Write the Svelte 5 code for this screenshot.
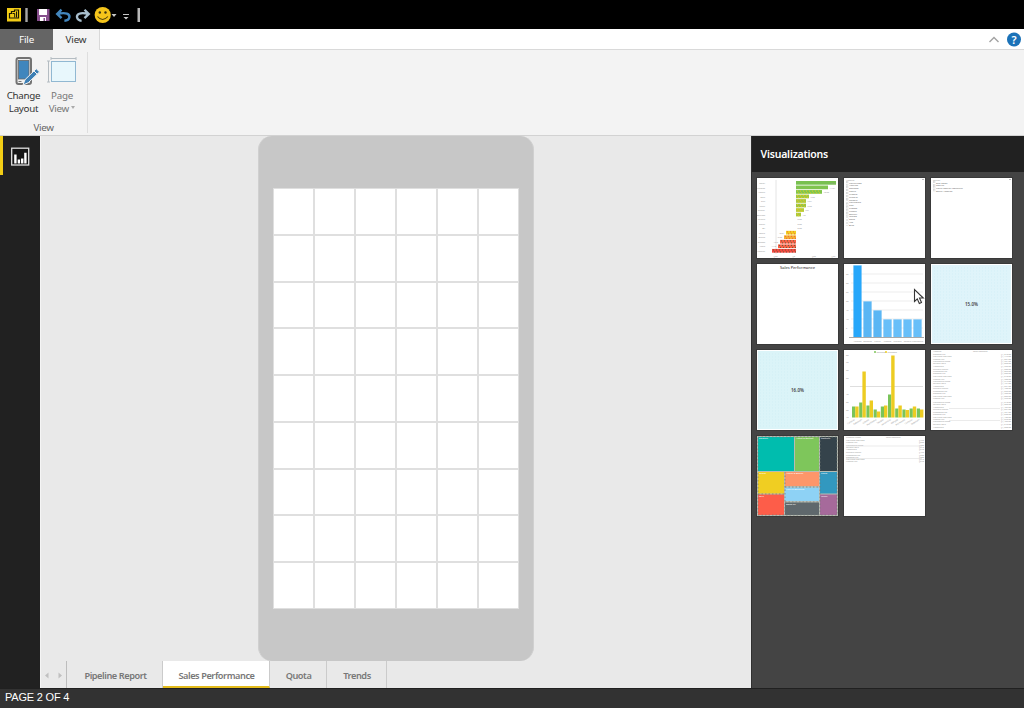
<script>
  const cells = Array.from({ length: 54 });
  const pages = [
    { name: 'Pipeline Report', w: 95 },
    { name: 'Sales Performance', w: 107, active: true },
    { name: 'Quota', w: 57 },
    { name: 'Trends', w: 60 }
  ];
  const bars = [
    ['Retail', 39, 40, '#78c050', '100%'], ['Finance', 39, 32, '#80c450', '11.04'], ['Health', 39, 26, '#80c64a', '10.50'],
    ['Tech', 39, 13, '#a0c840', '7.50'], ['Edu', 39, 10, '#a8c63e', '7.04'], ['Legal', 39, 10, '#9cc540', '6.50'],
    ['Energy', 39, 8, '#b8cb38', '5.0'], ['Services', 39, 5, '#aac83c', '4.0'], ['Mining', 39, 0, '#fff', '0.00'],
    ['Travel', 39, 0, '#fff', '0.00'], ['Oil', 39, 0, '#fff', '0.00'], ['Media', 29, 10, '#f0ce20', '-8.04'],
    ['Sports', 27, 12, '#f3b030', '-9.50'], ['Games', 23, 16, '#fb6046', '-12.0'], ['Food', 21, 18, '#f96045', '-14.0'], ['Apparel', 15, 24, '#f4483f', '']
  ];
  const names = ['Northridge', 'Adatum', 'Contoso', 'Fabrik', 'Litware', 'Wingtip', 'Tailspin', 'Northwind', 'Trey', 'Prosew', 'Lucern', 'Southri', 'Margie', 'Coho', 'Ace', 'Blue'];
  const nameY = [5, 7.8, 10.1, 13, 16, 19.1, 22, 24.5, 27.4, 30.3, 33.2, 36.1, 38.7, 41.5, 44.5, 47.5];
  const cols = [[9.5, 72, '#27a7fa'], [19.5, 36, '#5ab6f4'], [29.5, 27, '#5ab6f4'], [39.5, 18, '#68bff9'], [49.5, 18, '#68bff9'], [59.5, 18, '#68bff9'], [69.5, 18, '#68bff9']];
  const pairs = [[11, 11], [15, 46], [12, 17], [8, 6], [11, 12], [23, 62], [9, 12], [8, 7.5], [9, 11], [9, 8]];
  const rowsY = [5, 7.4, 9.8, 12, 14.2, 17.4, 19.7, 22, 24.2, 26.6, 29.5, 31.9, 34.2, 36.6, 39, 41.8, 44.2, 46.5, 48.8, 53.2, 55.4, 57.8, 60.2, 62.5, 65.4, 67.8, 70.1, 72.4, 74.8, 78.3];
  const company = ['Contoso Ltd', 'Fabrikam Services', 'Litware Inc', 'Northwind Trade', 'Tailspin Toys', 'Adventure', 'Wingtip Works', 'Proseware Co'];
  const table = [4.8, 7.2, 9.5, 12, 14, 17, 20, 22, 24.2, 26];
  const tree = [
    [1, 1, 36, 34, '#00bdae', 'Electron'], [38, 1, 24, 34, '#7ec65b', 'Home & Garden'], [63, 1, 17, 34, '#35434b', 'Clothing'],
    [1, 36, 26, 21.5, '#f0ce22', 'Sports'], [28, 36, 34, 14, '#fd966a', 'Health & Beauty'], [63, 36, 17, 21.5, '#3298bf', 'Travel'],
    [28, 51.5, 34, 13.5, '#8ed2f5', 'Food & Beverage'], [1, 58.5, 26, 20.5, '#fd5d49', 'Toys'],
    [28, 66.5, 34, 12.5, '#5f686c', 'Office Su'], [63, 58.5, 17, 20.5, '#a66a9b', 'Music']
  ];
</script>

<div class="window">
  <header class="titlebar">
    <svg width="150" height="28" viewBox="0 0 150 28">
      <rect x="7" y="8" width="14" height="13.5" fill="#f2cc16" />
      <path d="M9.5 18v-4.5h2v-2h3v-1.5h4v8z" fill="none" stroke="#1b1804" stroke-width="1.2" />
      <path d="M12.5 13.5h2.2v4M16.5 11.5v6" stroke="#1b1804" fill="none" />
      <rect x="25.3" y="8" width="2.4" height="14" fill="#a5a5a5" />
      <path d="M37 9h12.5v12H37z" fill="#864e8c" />
      <path d="M39 9h8v6h-8zM40 17h6v4h-6z" fill="#fff" /><path d="M43.5 18h1.5v3h-1.5z" fill="#864e8c" />
      <path d="M61.5 9.7l-4.3 4.2 4.3 4.2M58 13.9c8-2 12 .4 11.4 3.4-.4 2.2-2.4 3.3-5 3.5" fill="none" stroke="#4386bd" stroke-width="2.4" />
      <path d="M84.5 9.7l4.3 4.2-4.3 4.2M88 13.9c-8-2-11.6.4-11 3.4.4 2.2 2.2 3.3 4.6 3.5" fill="none" stroke="#a9bfce" stroke-width="2.3" />
      <circle cx="102.7" cy="15" r="8.1" fill="#f5c51b" />
      <circle cx="99.8" cy="12.5" r="1.2" fill="#3d3510" /><circle cx="105.5" cy="12.5" r="1.2" fill="#3d3510" />
      <path d="M97.5 16.5q5 6 10.4 0" fill="none" stroke="#51430b" stroke-width="1.1" />
      <path d="M111.5 14h5l-2.5 3zM123.5 17h5l-2.5 2.5z" fill="#c6c6c6" /><path d="M123 14.5h6" stroke="#c6c6c6" />
      <rect x="137.5" y="8" width="2.5" height="14" fill="#b8b8b8" />
    </svg>
  </header>
  <nav class="ribbon-tabs">
    <span class="file">File</span><span class="view">View</span>
    <svg class="help" width="40" height="21" viewBox="0 0 40 21">
      <path d="M5.5 13L10 8.5l4.5 4.5" fill="none" stroke="#a2a2a2" stroke-width="1.4" />
      <circle cx="30" cy="10.5" r="7" fill="#1b72b8" />
      <text x="30" y="14.6" text-anchor="middle" font-size="11" font-weight="600" fill="#fff">?</text>
    </svg>
  </nav>
  <section class="ribbon">
    <div class="group">
      <div class="tools">
        <div class="tool change">
          <svg width="32" height="34" viewBox="0 0 32 34">
            <rect x="8.5" y="4" width="14.5" height="26" rx="2" fill="#f0f0f0" stroke="#737373" stroke-width="2" />
            <rect x="10.5" y="6.5" width="10.5" height="18.5" fill="#4086bd" stroke="#666" stroke-width=".8" />
            <path d="M10.5 27.5h3M16 27.5h3" stroke="#777" />
            <path d="M15 31l2-5.3L28.3 14.7l3.2 3.2-11.2 10.8z" fill="#3c7fb5" stroke="#f3f3f3" stroke-width="1" />
            <path d="M25.7 16.7l3.3 3.3" stroke="#f3f3f3" />
          </svg>
          <span>Change<br />Layout</span>
        </div>
        <div class="tool page">
          <svg width="32" height="34" viewBox="0 0 32 34">
            <rect x="4.5" y="7.5" width="24" height="20" fill="#e8f7fc" stroke="#91b8d2" />
            <path d="M4 4.5h25M1.5 7v21M4 3v3M29 3v3M0 7h3M0 28h3" stroke="#b4bcc2" fill="none" />
          </svg>
          <span>Page<br />View <i></i></span>
        </div>
      </div>
      <span class="group-name">View</span>
    </div>
  </section>
  <main>
    <aside class="rail">
      <div class="report">
        <svg width="20" height="20" viewBox="0 0 20 20"><rect x="1.7" y="1.2" width="17" height="16.8" fill="#151515" stroke="#e0e0e0" stroke-width="1.3" /><path d="M5.4 16.5v-9M8.9 16.5v-4M12.2 16.5v-5M15.4 16.5V5.8" stroke="#fff" stroke-width="2.4" /></svg>
      </div>
    </aside>
    <section class="canvas">
      <div class="phone"><div class="grid">{#each cells as _}<span></span>{/each}</div></div>
      <footer class="pages">
        <div class="arrows"><svg width="26" height="27" viewBox="0 0 26 27"><path d="M7.5 11.5v6L4 14.5zM17.5 11.5v6l3.5-3z" fill="#c0c0c0" /></svg></div>
        {#each pages as p}<div class="tab" class:active={p.active} style:width="{p.w}px">{p.name}</div>{/each}
      </footer>
    </section>
    <aside class="panel">
      <h2>Visualizations</h2>
      <div class="tiles">
        <svg viewBox="0 0 81 80">
          <path d="M19 2v74" stroke="#e4e4e4" />
          {#each bars as b, i}
            <text x="8" y={6 + i * 4.53} text-anchor="end" class="tiny">{b[0]}</text>
            <rect x={b[1]} y={3 + i * 4.53} width={b[2]} height="3.7" fill={b[3]} />
            {#if i > 1 && b[2]}<path d="M{b[1] + 1} {4 + i * 4.53}h{b[2] - 2}M{b[1] + 2} {6 + i * 4.53}h{b[2] - 2}" stroke={i < 11 ? '#f0c81d' : i < 13 ? '#f15c38' : '#54603b'} stroke-width=".9" stroke-dasharray="1 2" />{/if}
            <text x={i === 0 ? 73 : i > 10 ? b[1] - 7 : b[1] + b[2] + 1.5} y={6 + i * 4.53} class="tiny">{b[4]}</text>
          {/each}
          {#each ['-$50', '$0', '$50', '$99'] as t, i}<text x={16 + i * 19.5} y="78.5" class="tiny">{t}</text>{/each}
        </svg>
        <svg viewBox="0 0 81 80">
          <text x="2" y="2.8" class="tiny">Account</text><path d="M78 1.5h2" stroke="#bbb" />
          {#each names as n, i}<rect x="2.5" y={nameY[i] - 1.7} width="1.5" height="1.5" fill="none" stroke="#c5c5c5" stroke-width=".4" /><text x="5" y={nameY[i] + .5} class="list">{n}</text>{/each}
        </svg>
        <svg viewBox="0 0 81 80">
          <text x="2" y="2.8" class="tiny">Region</text><path d="M78 1.5h2" stroke="#bbb" />
          {#each ['East Coast', 'Central', 'North Central Mountain', 'South America'] as n, i}<rect x="2.5" y={[3.3, 6.3, 8.6, 11.5][i]} width="1.5" height="1.5" fill="none" stroke="#c5c5c5" stroke-width=".4" /><text x="5" y={[5.6, 8.4, 10.7, 13.7][i]} class="list">{n}</text>{/each}
        </svg>
        <svg viewBox="0 0 81 80"><text x="40.5" y="4.6" text-anchor="middle" textLength="35" font-size="4" fill="#222">Sales Performance</text></svg>
        <svg viewBox="0 0 81 80">
          {#each [10, 19, 28, 37, 46, 55, 64] as y, i}<path d="M7 {y}h72" stroke="#ededed" /><text x="2" y={y + 1} class="tiny">{35 - i * 5}</text>{/each}
          {#each cols as c, i}<rect x={c[0]} y={73.5 - c[1]} width="8" height={c[1]} fill={c[2]} stroke="#4aaff2" stroke-width=".4" stroke-dasharray="1 1" /><text x={c[0] + 4} y="77.5" text-anchor="middle" class="tiny">{names[i + 1]}</text>{/each}
          <path d="M5 73.5h75" stroke="#aaa" />
        </svg>
        {#each [['15.0%', '#dff4fa'], ['16.0%', '#dbf4f8']] as card}
          <svg viewBox="0 0 81 80"><rect x="1" y="1" width="79" height="78" fill={card[1]} /><g class="mesh">{#each Array(25) as _, i}<path d="M3 {4 + i * 3}h75" />{/each}</g><text x="40.5" y="42.2" text-anchor="middle" textLength="13" class="percent">{card[0]}</text></svg>
        {/each}
        <svg viewBox="0 0 81 80">
          <path d="M6 36.5h73" stroke="#dedede" />
          <path d="M30 2h2" stroke="#7cc65a" stroke-width="1.7" /><path d="M41 2h2" stroke="#f0ce20" stroke-width="1.7" />
          <text x="32.5" y="3" class="tiny">Revenue</text><text x="43.5" y="3" class="tiny">Expected</text>
          {#each [6, 13, 21, 29, 45, 53, 61, 68] as y, i}<text x="2" y={y} class="tiny">{80 - i * 10}</text>{/each}
          {#each pairs as p, i}
            <rect x={8 + i * 7.2} y={67.5 - p[0]} width="3.2" height={p[0]} fill="#79c45a" /><rect x={11.2 + i * 7.2} y={67.5 - p[1]} width="3.4" height={p[1]} fill="#edcc22" />
            <text x={11 + i * 7.2} y="70" text-anchor="end" class="tiny" transform="rotate(-32 {11 + i * 7.2} 70)">{company[i % 8].split(' ')[0]}</text>
          {/each}
        </svg>
        <svg viewBox="0 0 81 80">
          <text x="2" y="2.3" class="tiny">Account</text><text x="42" y="2.3" class="tiny">Total Revenue</text>
          {#each rowsY as y, i}<text x="2" y={y} class="tiny">{company[i % 8]}</text><text x="80" y={y} text-anchor="end" class="tiny">$1,{(i * 137 + 210) % 900 + 100}.00</text>{/each}
          <path d="M18 58.5h51M18 70.5h51" stroke="#e3e3e3" stroke-width=".7" />
        </svg>
        <svg viewBox="0 0 81 80">
          <rect width="81" height="80" fill="#b7bcb3" />
          {#each tree as t}<rect x={t[0]} y={t[1]} width={t[2]} height={t[3]} fill={t[4]} /><text x={t[0] + 1} y={t[1] + 2.1} font-size="2.3" fill="#fff">{t[5]}</text>{/each}
          <path d="M1 1h79v78H1zM28 36v43M63 1v78M1 58h26M28 51h34M28 66h34" fill="none" stroke="#737a72" stroke-width=".7" stroke-dasharray="1.5 2" />
        </svg>
        <svg viewBox="0 0 81 80">
          <text x="2" y="2.3" class="tiny">Product Name</text><text x="42" y="2.3" class="tiny">Total Revenue</text>
          {#each table as y, i}<text x="2" y={y} class="tiny">{company[(i + 1) % 8]}</text><text x="80" y={y} text-anchor="end" class="tiny">{['$475', '$620', '$380', '$215', '$540'][i % 5]}</text>{/each}
          <path d="M2 10h76M2 22.5h76" stroke="#ddd" stroke-width=".6" />
        </svg>
      </div>
      <svg class="cursor" width="12" height="18" viewBox="0 0 12 18"><path d="M1.5 1.5v12l2.8-2.6 2 4.6 2.2-1-2-4.5h3.8z" fill="#fff" stroke="#353535" stroke-width="1.1" /></svg>
    </aside>
  </main>
  <footer class="status">PAGE 2 OF 4</footer>
</div>

<style>
  :global(body) { margin: 0; overflow: hidden; }
  .window { width: 1024px; height: 708px; display: flex; flex-direction: column; font-family: "Noto Sans", sans-serif; background: #e9e9e9; }
  svg { display: block; flex: none; }
  .titlebar { height: 29px; background: #000; flex: none; }
  .ribbon-tabs { height: 21px; display: flex; background: #fff; flex: none; font-size: 9.8px; letter-spacing: -.15px; line-height: 22px; text-align: center; box-shadow: inset 0 -1px #d9d9d9; }
  .file { width: 53px; background: #656565; color: #fff; }
  .view { width: 46px; background: #f3f3f3; color: #333; border-right: 1px solid #d9d9d9; }
  .help { margin-left: auto; }
  .ribbon { height: 85px; background: #f3f3f3; border-bottom: 1px solid #d2d2d2; flex: none; display: flex; }
  .group { width: 87px; height: 81px; margin-top: 2px; border-right: 1px solid #dedede; display: flex; flex-direction: column; color: #333; font-size: 9.8px; letter-spacing: -.3px; line-height: 13px; }
  .tools { display: flex; padding-left: 3px; }
  .tool { width: 41px; display: flex; flex-direction: column; align-items: center; text-align: center; padding-top: 2px; }
  .tool span { white-space: nowrap; margin-top: 1px; }
  .tool.page { width: 36px; color: #777; }
  .page svg { margin-left: 1px; }
  .page i { display: inline-block; border: 2.5px solid transparent; border-top: 3px solid #aaa; vertical-align: 3px; border-bottom: 0; }
  .group-name { margin-top: 6px; text-align: center; color: #666; }
  main { flex: 1; min-height: 0; display: flex; }
  .rail { width: 40px; background: #212121; border-right: 1px solid #f5f5f5; flex: none; }
  .report { height: 39px; width: 40px; border-left: 3px solid #f2cd15; display: flex; align-items: center; padding: 2px 0 0 7px; box-sizing: border-box; }
  .canvas { width: 710px; display: flex; flex-direction: column; align-items: flex-start; background: #e9e9e9; }
  .phone { width: 276px; height: 525px; box-sizing: border-box; margin-left: 217px; padding: 52px 13px 52px 14px; border: solid #d0d0d0; border-width: 0 1px; border-radius: 14px; background: #c7c7c7; flex: none; }
  .grid { width: 246px; height: 421px; display: grid; grid-template-columns: repeat(6, 39px); grid-template-rows: repeat(9, 1fr); gap: 2px; padding: 1px; box-sizing: border-box; background: #dfdfdf; }
  .grid span { background: #fff; }
  .pages { height: 27px; display: flex; margin-top: auto; font-size: 9.2px; letter-spacing: -.43px; font-weight: 600; color: #777; line-height: 29px; }
  .arrows { width: 25px; border-right: 1px solid #bdbdbd; overflow: hidden; margin-right: 1px; }
  .tab { box-sizing: border-box; text-align: center; border-right: 1px solid #cbcbcb; white-space: nowrap; flex: none; padding-left: 1px; }
  .tab.active { background: #fff; border-bottom: 2px solid #e4bc1b; }
  .panel { width: 273px; flex: none; background: #444; position: relative; border-left: 1px solid #303030; box-sizing: border-box; }
  h2 { margin: 0; height: 36px; background: #212121; color: #fff; font-size: 10.5px; letter-spacing: -.2px; line-height: 36px; font-weight: 600; padding-left: 8.5px; }
  .tiles { display: grid; grid-template-columns: repeat(3, 81px); grid-auto-rows: 80px; gap: 6px; padding: 6px 5px; }
  .tiles svg { background: #fff; width: 81px; height: 80px; box-shadow: 0 0 0 1px #393939; }
  .tiny { font-size: 2.2px; fill: #999; }
  .list { font-size: 2.4px; fill: #666; }
  .percent { font-size: 4.5px; font-weight: 600; fill: #444; }
  .mesh path { fill: none; stroke: #cfedf5; stroke-width: .7; stroke-dasharray: 1 2; }
  .cursor { position: absolute; left: 161px; top: 152px; }
  .status { height: 20px; background: #323232; border-top: 1px solid #202020; box-sizing: border-box; flex: none; color: #fff; font: 11px/16px "Liberation Sans", sans-serif; letter-spacing: -.2px; padding-left: 5px; }
</style>
